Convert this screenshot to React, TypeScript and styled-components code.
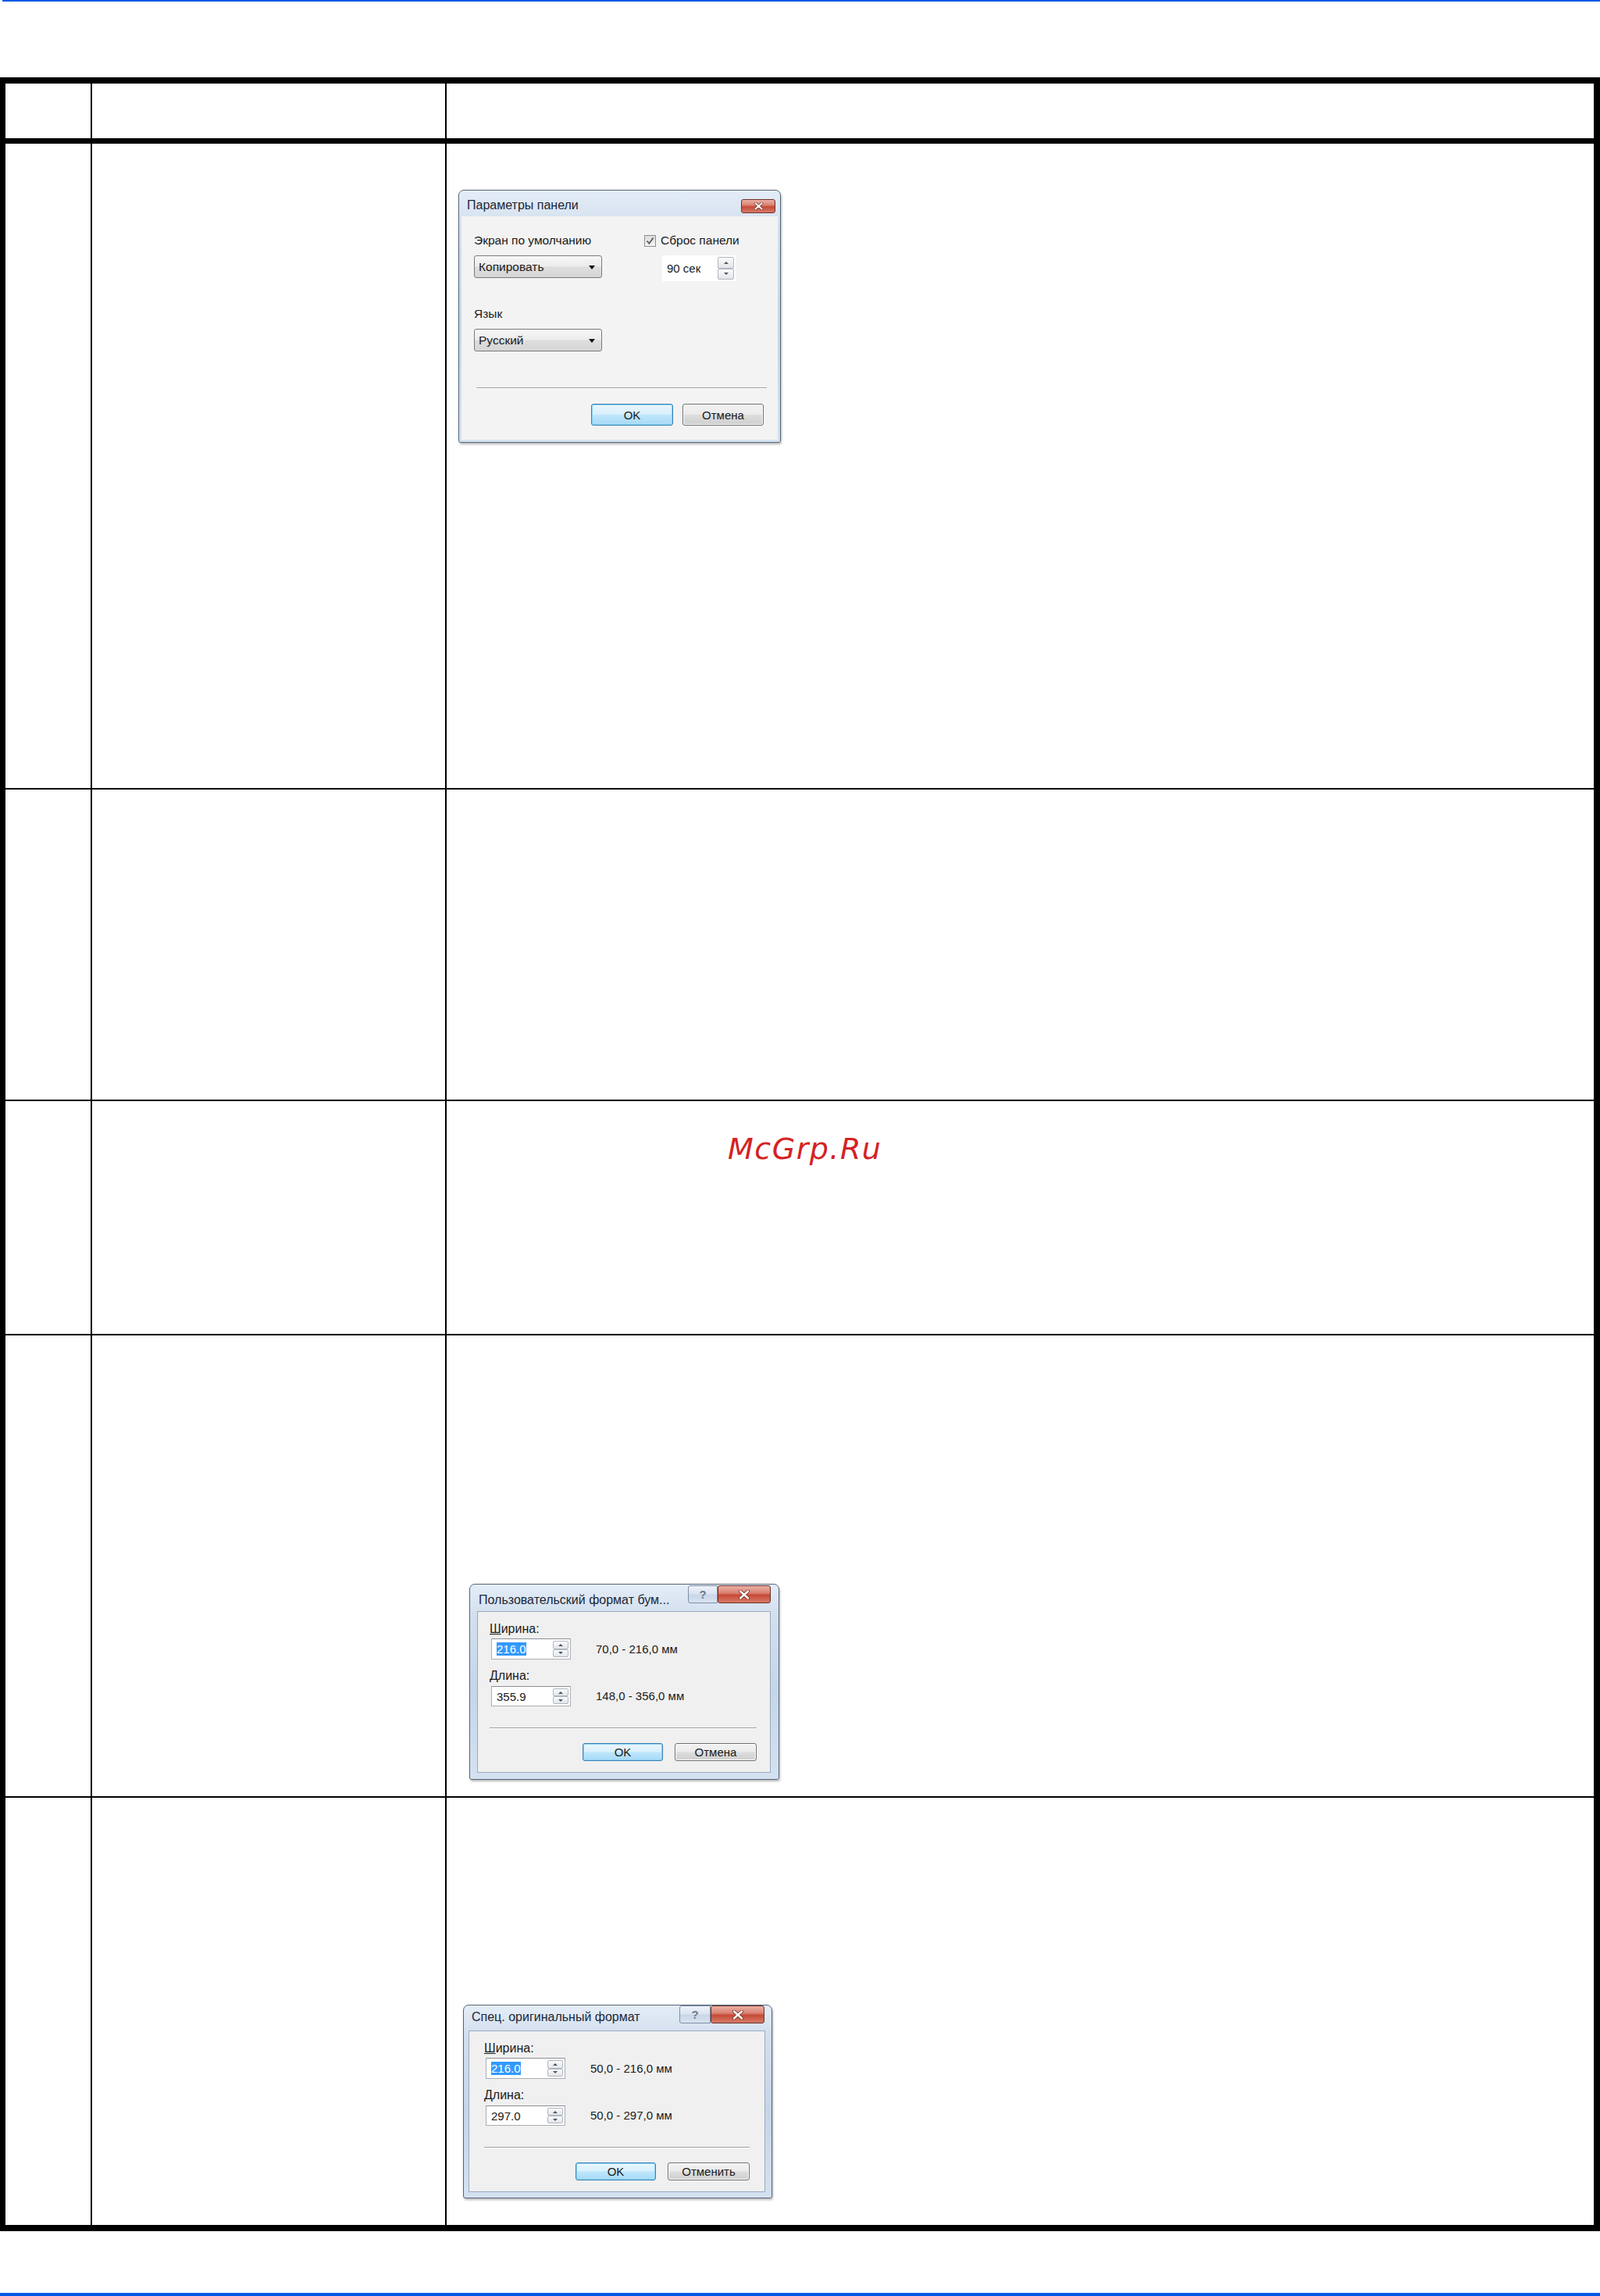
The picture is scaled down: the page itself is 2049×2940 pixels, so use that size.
import styled, { createGlobalStyle } from 'styled-components'

const GlobalStyle = createGlobalStyle`
  *, *::before, *::after {
    box-sizing: border-box;
  }

  html, body {
    margin: 0;
    padding: 0;
    background: #ffffff;
  }

  body {
    font-family: 'Liberation Sans', Arial, sans-serif;
    color: #000000;
  }
`

const BLUE = '#0058e6'

const StyledPage = styled.div`
  width: 2049px;
  display: flex;
  flex-direction: column;
`

const StyledRule = styled.div<{ $height: number; $inset?: number }>`
  height: ${({ $height }) => $height}px;
  margin-left: ${({ $inset }) => $inset ?? 0}px;
  background: ${BLUE};
`

const StyledTable = styled.div`
  margin: 97px 0 79px;
  border: 8px solid #000;
  border-left-width: 7px;
`

const StyledRow = styled.div<{ $height: number; $divider: number }>`
  display: grid;
  grid-template-columns: 109px 454px 1fr;
  height: ${({ $height, $divider }) => $height + $divider}px;
  border-top: ${({ $divider }) => $divider}px solid #000;
`

const StyledCell = styled.div`
  min-width: 0;

  & + & {
    border-left: 2px solid #000;
  }
`

const StyledContent = styled(StyledCell)<{ $top: number; $left: number }>`
  padding: ${({ $top }) => $top}px 0 0 ${({ $left }) => $left}px;
`

const StyledWatermark = styled.div`
  font-family: 'DejaVu Sans', sans-serif;
  font-style: italic;
  font-size: 38px;
  line-height: 44px;
  letter-spacing: 1.5px;
  color: #d52222;
`

/* ---------- Windows 7 style dialog parts ---------- */

const StyledWindow = styled.div<{ $width: number; $height: number; $pad: string }>`
  width: ${({ $width }) => $width}px;
  height: ${({ $height }) => $height}px;
  display: flex;
  flex-direction: column;
  padding: ${({ $pad }) => $pad};
  border: 1px solid #56667a;
  border-radius: 7px 7px 3px 3px;
  background: linear-gradient(180deg, #e4edf7 0%, #d2dfee 16%, #c5d6ea 55%, #d4e1f0 100%);
  box-shadow: 1px 2px 3px rgba(0, 0, 0, 0.28);
  color: #1a1a1a;
  overflow: hidden;
`

const StyledTitleBar = styled.div<{ $height: number }>`
  height: ${({ $height }) => $height}px;
  flex: none;
  display: flex;
  align-items: flex-start;
`

const StyledTitle = styled.div<{ $top: number; $left: number }>`
  flex: 1;
  margin-top: ${({ $top }) => $top}px;
  padding-left: ${({ $left }) => $left}px;
  font-size: 16px;
  line-height: 20px;
  color: #1b2738;
  white-space: nowrap;
`

const StyledCaptions = styled.div<{ $top: number; $right: number }>`
  display: flex;
  margin-top: ${({ $top }) => $top}px;
  margin-right: ${({ $right }) => $right}px;
`

const StyledCaptionButton = styled.div<{ $kind: 'help' | 'close'; $width: number; $height: number }>`
  width: ${({ $width }) => $width}px;
  height: ${({ $height }) => $height}px;
  display: flex;
  align-items: center;
  justify-content: center;
  border: 1px solid ${({ $kind }) => ($kind === 'close' ? '#6e3128' : '#7d8ea5')};
  border-radius: ${({ $kind }) => ($kind === 'close' ? '3px' : '3px 0 0 3px')};
  background: ${({ $kind }) =>
    $kind === 'close'
      ? 'linear-gradient(180deg, #eab0a6 0%, #d98170 42%, #c64a36 55%, #d77b68 100%)'
      : 'linear-gradient(180deg, #eef3f9 0%, #dbe5f1 45%, #c9d6e7 55%, #d9e4f1 100%)'};
  font-size: 15px;
  font-weight: bold;
  color: #6d7c90;
`

const StyledClient = styled.div<{ $bordered?: boolean }>`
  flex: 1;
  min-height: 0;
  display: flex;
  flex-direction: column;
  background: ${({ $bordered }) => ($bordered ? '#f0f0f0' : '#f3f3f3')};
  border: ${({ $bordered }) => ($bordered ? '1px solid #9aa9bc' : 'none')};
`

const StyledLabel = styled.div<{ $top?: number; $size?: number; $line?: number }>`
  margin-top: ${({ $top }) => $top ?? 0}px;
  font-size: ${({ $size }) => $size ?? 16}px;
  line-height: ${({ $line }) => $line ?? 20}px;
  white-space: nowrap;
`

const StyledSelect = styled.div<{ $top: number }>`
  position: relative;
  width: 164px;
  height: 29px;
  margin-top: ${({ $top }) => $top}px;
  display: flex;
  align-items: center;
  padding-left: 5px;
  border: 1px solid #7a7a7a;
  border-radius: 3px;
  background: linear-gradient(180deg, #f7f7f7 0%, #ececec 48%, #dedede 52%, #d6d6d6 100%);
  font-size: 15.5px;

  &::after {
    content: '';
    position: absolute;
    right: 8px;
    top: 12px;
    border-left: 4px solid transparent;
    border-right: 4px solid transparent;
    border-top: 5px solid #111;
  }
`

const StyledCheckRow = styled.div`
  display: flex;
  align-items: center;
  gap: 6px;
  height: 20px;
  font-size: 15.5px;
  white-space: nowrap;
`

const StyledCheckBox = styled.div`
  width: 15px;
  height: 15px;
  display: flex;
  align-items: center;
  justify-content: center;
  border: 1px solid #8e8f8f;
  background: linear-gradient(180deg, #dcdcdc, #f4f4f4);
`

const StyledSpinField = styled.div<{ $width: number; $height: number; $top: number; $left: number; $boxed?: boolean }>`
  width: ${({ $width }) => $width}px;
  height: ${({ $height }) => $height}px;
  margin: ${({ $top }) => $top}px 0 0 ${({ $left }) => $left}px;
  display: flex;
  align-items: stretch;
  padding: 2px 2px 2px 6px;
  background: #ffffff;
  border: ${({ $boxed }) => ($boxed ? '1px solid #abadb3' : 'none')};
  border-top-color: ${({ $boxed }) => ($boxed ? '#8c8f96' : 'transparent')};
  font-size: 15px;
`

const StyledSpinValue = styled.div`
  flex: 1;
  display: flex;
  align-items: center;
`

const StyledSelected = styled.span`
  background: #3399ff;
  color: #ffffff;
  line-height: 17px;
`

const StyledSpin = styled.div<{ $width: number }>`
  width: ${({ $width }) => $width}px;
  display: flex;
  flex-direction: column;
`

const StyledSpinHalf = styled.div<{ $dir: 'up' | 'down' }>`
  flex: 1;
  display: flex;
  align-items: center;
  justify-content: center;
  border: 1px solid #b0b7c0;
  border-radius: 2px;
  background: linear-gradient(180deg, #fbfbfb, #e2e5e9);

  &::after {
    content: '';
    border-left: 3px solid transparent;
    border-right: 3px solid transparent;
    ${({ $dir }) => ($dir === 'up' ? 'border-bottom: 3px solid #4d5560;' : 'border-top: 3px solid #4d5560;')}
  }
`

const StyledDivider = styled.div<{ $top: number; $left?: number; $right?: number }>`
  height: 1px;
  margin: ${({ $top }) => $top}px ${({ $right }) => $right ?? 0}px 0 ${({ $left }) => $left ?? 0}px;
  background: #a0a0a0;
  box-shadow: 0 1px 0 #ffffff;
`

const StyledButtonRow = styled.div<{ $top: number; $right?: number; $gap: number }>`
  display: flex;
  justify-content: flex-end;
  gap: ${({ $gap }) => $gap}px;
  margin: ${({ $top }) => $top}px ${({ $right }) => $right ?? 0}px 0 0;
`

const StyledButton = styled.div<{ $width: number; $height: number; $primary?: boolean }>`
  width: ${({ $width }) => $width}px;
  height: ${({ $height }) => $height}px;
  display: flex;
  align-items: center;
  justify-content: center;
  border: 1px solid ${({ $primary }) => ($primary ? '#3c7fb1' : '#707070')};
  border-radius: 3px;
  background: ${({ $primary }) =>
    $primary
      ? 'linear-gradient(180deg, #eaf6fd 0%, #d9f0fc 48%, #bee6fd 52%, #a7d9f5 100%)'
      : 'linear-gradient(180deg, #f2f2f2 0%, #ebebeb 48%, #dddddd 52%, #cfcfcf 100%)'};
  box-shadow: ${({ $primary }) => ($primary ? 'inset 0 0 0 1px #8ad3f7' : 'inset 0 0 0 1px #fcfcfc')};
  font-size: 15px;
  color: #1a1a1a;
`

/* ---------- panel dialog body ---------- */

const StyledPanelBody = styled.div`
  display: flex;
  flex-direction: column;
  padding: 21px 0 0 16px;
`

const StyledPanelGrid = styled.div`
  display: grid;
  grid-template-columns: 218px auto;
  align-items: start;
`

const StyledColumn = styled.div`
  display: flex;
  flex-direction: column;
`

/* ---------- size dialog body ---------- */

const StyledSizeBody = styled.div<{ $padLeft: number; $padRight: number }>`
  display: flex;
  flex-direction: column;
  padding: 13px ${({ $padRight }) => $padRight}px 0 ${({ $padLeft }) => $padLeft}px;
`

const StyledFieldRow = styled.div<{ $top: number }>`
  display: flex;
  align-items: center;
  gap: 32px;
  margin: ${({ $top }) => $top}px 0 0 2px;
`

const CloseGlyph = ({ size }: { size: number }) => (
  <svg width={size} height={size * 0.75} viewBox="0 0 16 12">
    <path d="M3 1.5 L13 10.5 M13 1.5 L3 10.5" stroke="#6b2a22" strokeWidth="4" strokeLinecap="round" />
    <path d="M3 1.5 L13 10.5 M13 1.5 L3 10.5" stroke="#ffffff" strokeWidth="2.4" strokeLinecap="round" />
  </svg>
)

const CheckGlyph = () => (
  <svg width="11" height="11" viewBox="0 0 11 11">
    <path d="M1.5 5.5 L4.3 8.8 L9.6 1.4" stroke="#5c5c5c" strokeWidth="1.8" fill="none" />
  </svg>
)

const Spinner = ({ width }: { width: number }) => (
  <StyledSpin $width={width}>
    <StyledSpinHalf $dir="up" />
    <StyledSpinHalf $dir="down" />
  </StyledSpin>
)

const PanelDialog: React.FC = () => (
  <StyledWindow $width={413} $height={324} $pad="0 3px 3px 3px">
    <StyledTitleBar $height={33}>
      <StyledTitle $top={9} $left={7}>Параметры панели</StyledTitle>
      <StyledCaptions $top={11} $right={3}>
        <StyledCaptionButton $kind="close" $width={44} $height={18}>
          <CloseGlyph size={13} />
        </StyledCaptionButton>
      </StyledCaptions>
    </StyledTitleBar>
    <StyledClient>
      <StyledPanelBody>
        <StyledPanelGrid>
          <StyledColumn>
            <StyledLabel $size={15.5}>Экран по умолчанию</StyledLabel>
            <StyledSelect $top={9}>Копировать</StyledSelect>
          </StyledColumn>
          <StyledColumn>
            <StyledCheckRow>
              <StyledCheckBox>
                <CheckGlyph />
              </StyledCheckBox>
              Сброс панели
            </StyledCheckRow>
            <StyledSpinField $width={94} $height={33} $top={9} $left={23}>
              <StyledSpinValue>90 сек</StyledSpinValue>
              <Spinner width={21} />
            </StyledSpinField>
          </StyledColumn>
        </StyledPanelGrid>
        <StyledLabel $top={32} $size={15.5}>Язык</StyledLabel>
        <StyledSelect $top={9}>Русский</StyledSelect>
        <StyledDivider $top={46} $left={3} $right={14} />
        <StyledButtonRow $top={20} $right={18} $gap={12}>
          <StyledButton $primary $width={105} $height={28}>OK</StyledButton>
          <StyledButton $width={104} $height={28}>Отмена</StyledButton>
        </StyledButtonRow>
      </StyledPanelBody>
    </StyledClient>
  </StyledWindow>
)

type SizeField = {
  label: string
  value: string
  range: string
  selected?: boolean
}

type SizeDialogProps = {
  title: string
  cancel: string
  fields: SizeField[]
  width: number
  height: number
  pad: string
  titleBar: number
  titleTop: number
  titleLeft: number
  captionTop: number
  captionRight: number
  helpWidth: number
  closeWidth: number
  padLeft: number
  padRight: number
}

const SizeDialog: React.FC<SizeDialogProps> = (props) => (
  <StyledWindow $width={props.width} $height={props.height} $pad={props.pad}>
    <StyledTitleBar $height={props.titleBar}>
      <StyledTitle $top={props.titleTop} $left={props.titleLeft}>{props.title}</StyledTitle>
      <StyledCaptions $top={props.captionTop} $right={props.captionRight}>
        <StyledCaptionButton $kind="help" $width={props.helpWidth} $height={23}>?</StyledCaptionButton>
        <StyledCaptionButton $kind="close" $width={props.closeWidth} $height={23}>
          <CloseGlyph size={16} />
        </StyledCaptionButton>
      </StyledCaptions>
    </StyledTitleBar>
    <StyledClient $bordered>
      <StyledSizeBody $padLeft={props.padLeft} $padRight={props.padRight}>
        {props.fields.map((field, index) => (
          <div key={field.label}>
            <StyledLabel $top={index === 0 ? 0 : 12} $line={18}>
              <u>{field.label.charAt(0)}</u>
              {field.label.slice(1)}
            </StyledLabel>
            <StyledFieldRow $top={index === 0 ? 3 : 4}>
              <StyledSpinField $width={102} $height={index === 0 ? 27 : 26} $top={0} $left={0} $boxed>
                <StyledSpinValue>
                  {field.selected ? <StyledSelected>{field.value}</StyledSelected> : field.value}
                </StyledSpinValue>
                <Spinner width={20} />
              </StyledSpinField>
              <StyledLabel $size={15}>{field.range}</StyledLabel>
            </StyledFieldRow>
          </div>
        ))}
        <StyledDivider $top={27} />
        <StyledButtonRow $top={19} $gap={15}>
          <StyledButton $primary $width={103} $height={23}>OK</StyledButton>
          <StyledButton $width={105} $height={23}>{props.cancel}</StyledButton>
        </StyledButtonRow>
      </StyledSizeBody>
    </StyledClient>
  </StyledWindow>
)

const App: React.FC = () => (
  <>
    <GlobalStyle />
    <StyledPage>
      <StyledRule $height={2} $inset={3} />

      <StyledTable>
        <StyledRow $height={70} $divider={0}>
          <StyledCell />
          <StyledCell />
          <StyledCell />
        </StyledRow>

        <StyledRow $height={825} $divider={7}>
          <StyledCell />
          <StyledCell />
          <StyledContent $top={59} $left={15}>
            <PanelDialog />
          </StyledContent>
        </StyledRow>

        <StyledRow $height={397} $divider={2}>
          <StyledCell />
          <StyledCell />
          <StyledCell />
        </StyledRow>

        <StyledRow $height={298} $divider={2}>
          <StyledCell />
          <StyledCell />
          <StyledContent $top={39} $left={360}>
            <StyledWatermark>McGrp.Ru</StyledWatermark>
          </StyledContent>
        </StyledRow>

        <StyledRow $height={590} $divider={2}>
          <StyledCell />
          <StyledCell />
          <StyledContent $top={318} $left={29}>
            <SizeDialog
              title="Пользовательский формат бум..."
              cancel="Отмена"
              fields={[
                { label: 'Ширина:', value: '216.0', range: '70,0 - 216,0 мм', selected: true },
                { label: 'Длина:', value: '355.9', range: '148,0 - 356,0 мм' },
              ]}
              width={397}
              height={251}
              pad="0 10px 8px 9px"
              titleBar={34}
              titleTop={10}
              titleLeft={2}
              captionTop={1}
              captionRight={0}
              helpWidth={38}
              closeWidth={68}
              padLeft={15}
              padRight={17}
            />
          </StyledContent>
        </StyledRow>

        <StyledRow $height={547} $divider={2}>
          <StyledCell />
          <StyledCell />
          <StyledContent $top={265} $left={21}>
            <SizeDialog
              title="Спец. оригинальный формат"
              cancel="Отменить"
              fields={[
                { label: 'Ширина:', value: '216.0', range: '50,0 - 216,0 мм', selected: true },
                { label: 'Длина:', value: '297.0', range: '50,0 - 297,0 мм' },
              ]}
              width={396}
              height={248}
              pad="0 8px 7px 6px"
              titleBar={32}
              titleTop={5}
              titleLeft={4}
              captionTop={0}
              captionRight={1}
              helpWidth={40}
              closeWidth={69}
              padLeft={19}
              padRight={19}
            />
          </StyledContent>
        </StyledRow>
      </StyledTable>

      <StyledRule $height={4} />
    </StyledPage>
  </>
)

export default App
